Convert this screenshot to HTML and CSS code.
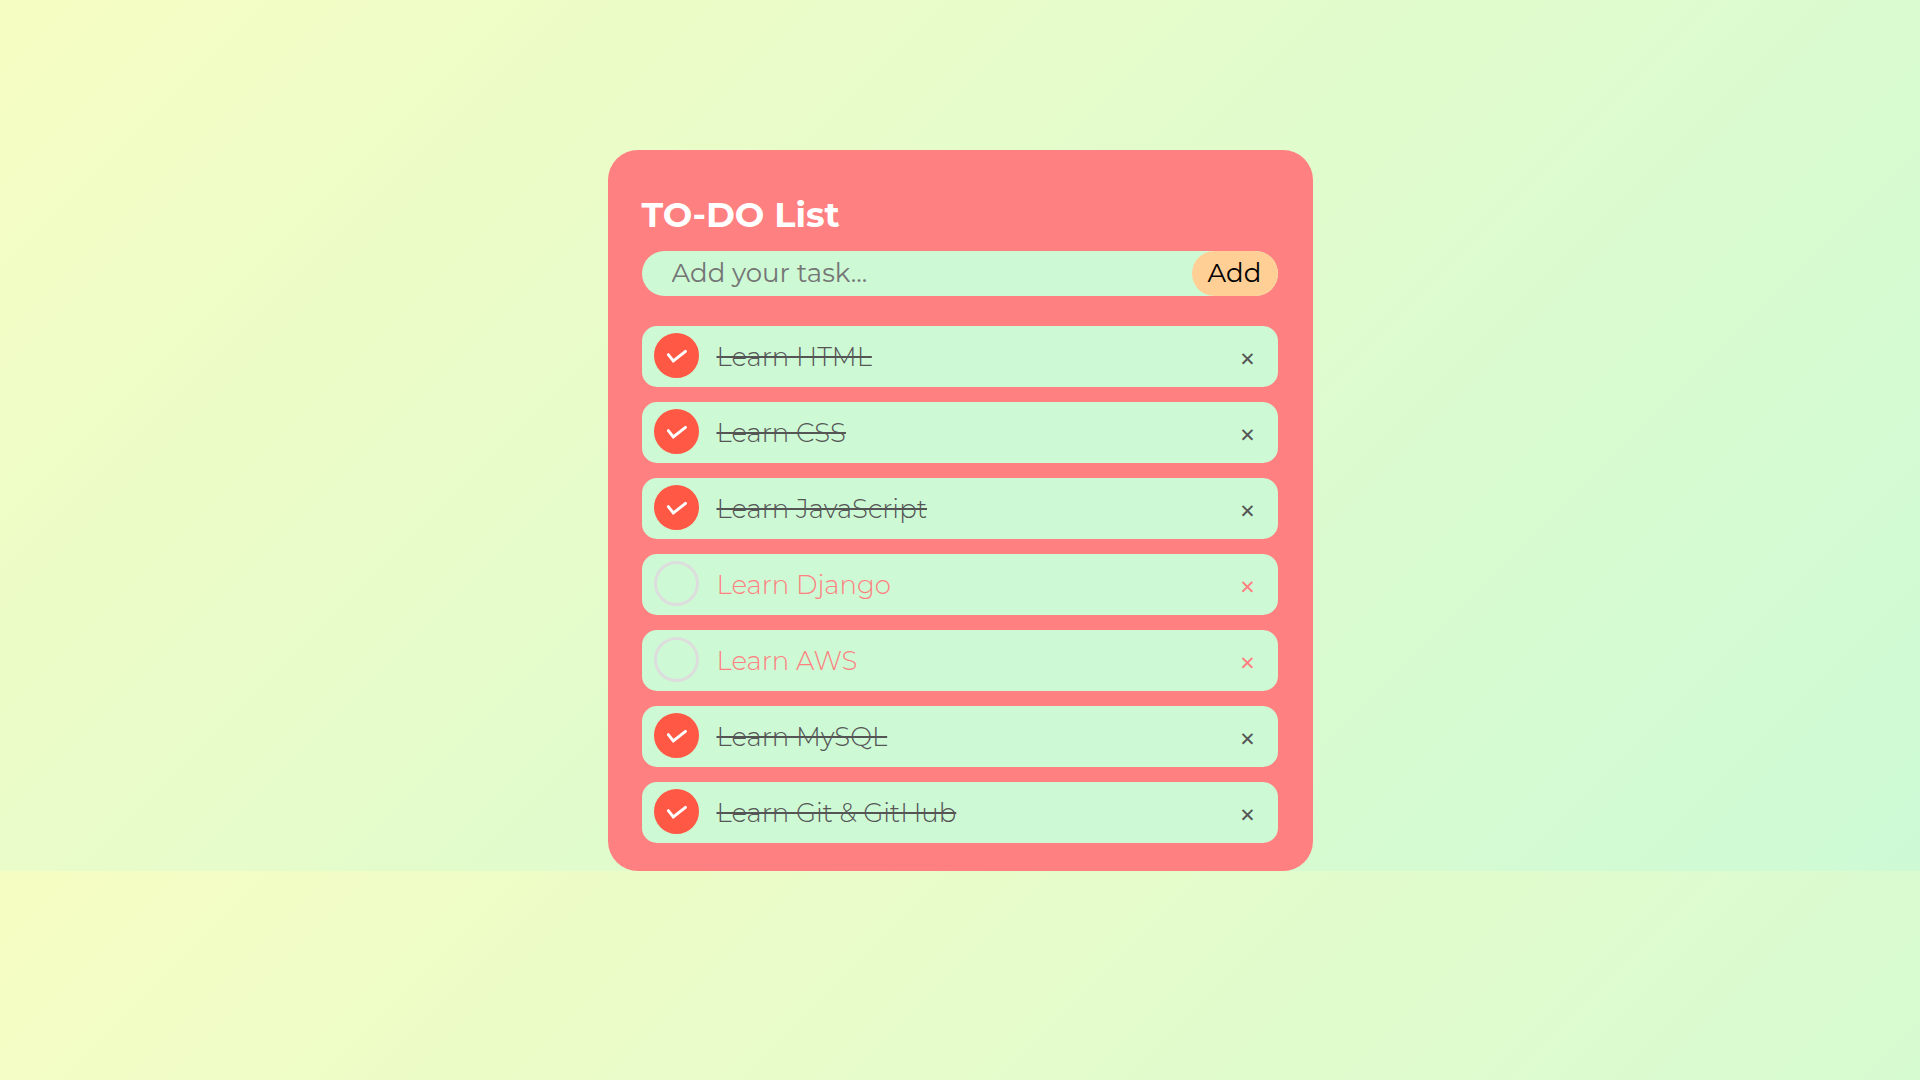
FILE: index.html
```
<!DOCTYPE html>
<html lang="en">
<head>
<meta charset="utf-8">
<meta name="viewport" content="width=device-width, initial-scale=1">
<title>TO-DO List</title>
<link rel="stylesheet" href="styles.css">
</head>
<body>
<svg class="sprite" aria-hidden="true">
  <symbol id="check" viewBox="0 0 45 45"><path d="M14.3 21.6 L19.3 28 L31.5 18.4" fill="none" stroke="#fff" stroke-width="2.9" stroke-linecap="round"/></symbol>
</svg>
<main class="card">
  <h1 class="title">TO-DO List</h1>
  <form class="entry">
    <input class="entry-text" type="text" placeholder="Add your task..." aria-label="Add your task">
    <button class="entry-add" type="button">Add</button>
  </form>
  <ul class="tasks">
    <li class="task">
      <span class="tick"><input class="tick-box" type="checkbox" id="t1" checked><svg class="tick-mark"><use href="#check"/></svg></span>
      <label class="task-name" for="t1">Learn HTML</label>
      <button class="remove" type="button" aria-label="Remove Learn HTML">×</button>
    </li>
    <li class="task">
      <span class="tick"><input class="tick-box" type="checkbox" id="t2" checked><svg class="tick-mark"><use href="#check"/></svg></span>
      <label class="task-name" for="t2">Learn CSS</label>
      <button class="remove" type="button" aria-label="Remove Learn CSS">×</button>
    </li>
    <li class="task">
      <span class="tick"><input class="tick-box" type="checkbox" id="t3" checked><svg class="tick-mark"><use href="#check"/></svg></span>
      <label class="task-name" for="t3">Learn JavaScript</label>
      <button class="remove" type="button" aria-label="Remove Learn JavaScript">×</button>
    </li>
    <li class="task">
      <span class="tick"><input class="tick-box" type="checkbox" id="t4"><svg class="tick-mark"><use href="#check"/></svg></span>
      <label class="task-name" for="t4">Learn Django</label>
      <button class="remove" type="button" aria-label="Remove Learn Django">×</button>
    </li>
    <li class="task">
      <span class="tick"><input class="tick-box" type="checkbox" id="t5"><svg class="tick-mark"><use href="#check"/></svg></span>
      <label class="task-name" for="t5">Learn AWS</label>
      <button class="remove" type="button" aria-label="Remove Learn AWS">×</button>
    </li>
    <li class="task">
      <span class="tick"><input class="tick-box" type="checkbox" id="t6" checked><svg class="tick-mark"><use href="#check"/></svg></span>
      <label class="task-name" for="t6">Learn MySQL</label>
      <button class="remove" type="button" aria-label="Remove Learn MySQL">×</button>
    </li>
    <li class="task">
      <span class="tick"><input class="tick-box" type="checkbox" id="t7" checked><svg class="tick-mark"><use href="#check"/></svg></span>
      <label class="task-name" for="t7">Learn Git &amp; GitHub</label>
      <button class="remove" type="button" aria-label="Remove Learn Git &amp; GitHub">×</button>
    </li>
  </ul>
</main>
</body>
</html>
```
FILE: styles.css
```
* {
  box-sizing: border-box;
}

body {
  margin: 0;
  padding-top: 150px;
  background: linear-gradient(135deg, #f6fdc3, #cdfad5);
  font-family: Montserrat, Inter, "Open Sans", sans-serif;
  font-size: 26px;
  font-weight: 400;
}

.sprite {
  display: none;
}

.card {
  max-width: 705px;
  margin: 0 auto;
  padding: 42px 35px 28px 34px;
  border-radius: 30px;
  background: #ff8080;
}

.title {
  margin: 0 0 14px;
  color: #fff;
  font-size: 35px;
  font-weight: 700;
  line-height: 45px;
}

.entry {
  display: flex;
  height: 45px;
  margin: 0 0 30px;
  border-radius: 23px;
  background: #cdfad5;
}

.entry-text {
  flex: 1;
  min-width: 0;
  padding: 0 0 2px 30px;
  border: 0;
  outline: 0;
  background: transparent;
  font: inherit;
}

.entry-text::placeholder {
  color: #757575;
}

.entry-add {
  width: 86px;
  padding: 0 0 2px;
  border: 0;
  border-radius: 23px;
  background: #ffcf96;
  color: #000;
  font: inherit;
}

.tasks {
  display: flex;
  flex-direction: column;
  gap: 15px;
  margin: 0;
  padding: 0;
  list-style: none;
}

.task {
  display: flex;
  align-items: flex-start;
  gap: 18px;
  padding: 7px 12px 9px;
  border-radius: 15px;
  background: #cdfad5;
  color: #ff8080;
}

.task:has(:checked) {
  color: #555;
}

.tick {
  display: grid;
}

.tick-box,
.tick-mark {
  grid-area: 1 / 1;
  width: 45px;
  height: 45px;
  margin: 0;
}

.tick-box {
  appearance: none;
  border: 3px solid #ddd;
  border-radius: 50%;
}

.tick-box:checked {
  border-color: #ff5945;
  background: #ff5945;
}

.tick-mark {
  visibility: hidden;
  pointer-events: none;
}

.tick-box:checked + .tick-mark {
  visibility: visible;
}

.task-name {
  height: 45px;
  font-weight: 300;
  line-height: 49px;
}

.task:has(:checked) .task-name {
  text-decoration: line-through;
}

.remove {
  width: 36px;
  height: 45px;
  margin: 0 0 0 auto;
  padding: 6px 0 0;
  border: 0;
  background: transparent;
  color: inherit;
  font: inherit;
  font-size: 32px;
  line-height: 39px;
}
```
